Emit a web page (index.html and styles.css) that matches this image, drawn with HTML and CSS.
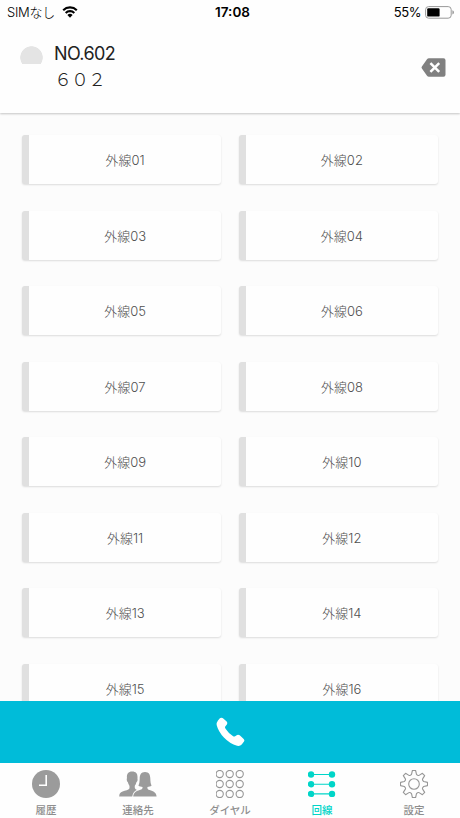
FILE: index.html
```html
<!DOCTYPE html>
<html lang="ja">
<head>
    <meta charset="UTF-8">
    <meta name="viewport" content="width=device-width, initial-scale=1.0">
    <title>回線</title>
    <link rel="stylesheet" href="styles.css">
</head>
<body>

<header class="header">
    <div class="status-bar">
        <div class="carrier">
            <span>SIMなし</span>
            <svg class="wifi" viewBox="0 0 16 12" width="16" height="12">
                <path d="M1.2 4.2a9.7 9.7 0 0 1 13.6 0M3.7 6.9a6.1 6.1 0 0 1 8.6 0" fill="none" stroke="#000" stroke-width="2.1"/>
                <path d="M8 11.8L5.4 9.1a3.7 3.7 0 0 1 5.2 0z"/>
            </svg>
        </div>
        <div class="clock">17:08</div>
        <div class="battery">
            <span>55%</span>
            <svg viewBox="0 0 30 13" width="30" height="13">
                <rect x="0.6" y="0.6" width="25.6" height="11.6" rx="3" fill="none" stroke="#999"/>
                <rect x="2.2" y="2.2" width="12.4" height="8.4" rx="1.2"/>
                <path d="M27.4 4.3q1.6.6 1.6 2.1t-1.6 2.1z" fill="#999"/>
            </svg>
        </div>
    </div>
    <div class="caller">
        <div class="presence"></div>
        <div class="caller-text">
            <div class="caller-name">NO.602</div>
            <div class="caller-number">６０２</div>
        </div>
        <svg class="delete" viewBox="0 0 25 19" width="25" height="19">
            <path d="M8 0.3h14.5a2 2 0 0 1 2 2v14.4a2 2 0 0 1-2 2H8q-1.3 0-2-1L.9 10.6q-.8-1.1 0-2.2L6 1.3q.7-1 2-1z" fill="#808080"/>
            <path d="M9.4 5.1l8.8 8.8M18.2 5.1L9.4 13.9" stroke="#fff" stroke-width="2.5"/>
        </svg>
    </div>
</header>

<main class="lines">
    <div class="line">外線01</div>
    <div class="line">外線02</div>
    <div class="line">外線03</div>
    <div class="line">外線04</div>
    <div class="line">外線05</div>
    <div class="line">外線06</div>
    <div class="line">外線07</div>
    <div class="line">外線08</div>
    <div class="line">外線09</div>
    <div class="line">外線10</div>
    <div class="line">外線11</div>
    <div class="line">外線12</div>
    <div class="line">外線13</div>
    <div class="line">外線14</div>
    <div class="line">外線15</div>
    <div class="line">外線16</div>
</main>

<div class="call-bar">
    <svg viewBox="46 66 88 90" width="29" height="30">
        <path fill="#fff" d="M62 68Q66 68 69 71L79 80Q82 84 79 88L74 94Q72 97 75 101Q84 115 98 124Q101 126 104 124L110 120Q114 118 118 121L130 132Q134 136 131 140L124 149Q119 155 110 153Q88 147 70 128Q53 110 48 90Q47 82 52 76L57 70Q59 68 62 68z"/>
    </svg>
</div>

<nav class="tabs">
    <div class="tab">
        <svg viewBox="0 0 28 28" width="28" height="28">
            <circle cx="14" cy="14" r="14" fill="#9b9b9b"/>
            <path d="M14.2 5v10.3H7" fill="none" stroke="#fff" stroke-width="1.6"/>
        </svg>
        <span>履歴</span>
    </div>
    <div class="tab">
        <svg viewBox="0 0 38 28" width="38" height="28">
            <path fill="#9b9b9b" d="M13.2 1.4C16.8 1.4 18.7 3.5 18.5 7.2Q18.4 8.8 18.6 9.6C18.6 11 18 11.8 17.4 12.2Q16.9 14.4 15.9 15.6C15.5 17.6 15.8 18.8 17 19.5Q18.5 20.3 20 21V26.4H.2C.3 23.4 1.2 22.3 3.6 21.4C6.3 20.4 9.6 19.8 10.4 18.4Q10.8 17 10.3 15.6Q9.3 14.2 8.9 12.2C7.8 11.5 7.4 9.2 8 8C7.4 4 9.3 1.4 13.2 1.4z"/>
            <path fill="#9b9b9b" stroke="#fefefe" stroke-width="1.8" paint-order="stroke" d="M26 2C30 2 31.2 4.8 31.3 8.4C31.4 11.8 31.7 13.8 32.6 15.4C31.5 16.4 30 16.8 28.4 16.9C28.2 18.8 28.9 19.5 30.6 20.1C34.6 21.5 37.1 22.4 37.6 26.4H14.2C14.6 22.7 16.7 21.3 19.4 20.4C22.6 19.4 23.7 18.9 23.6 16.9C22 16.8 20.5 16.4 19.4 15.4C20.3 13.8 20.6 11.8 20.7 8.4C20.8 4.8 22.1 2 26 2z"/>
        </svg>
        <span>連絡先</span>
    </div>
    <div class="tab">
        <svg viewBox="0 0 28 28" width="28" height="28">
            <g fill="none" stroke="#979797" stroke-width="1.1">
                <circle cx="3.7" cy="4" r="3.6"/><circle cx="13.7" cy="4" r="3.6"/><circle cx="23.7" cy="4" r="3.6"/>
                <circle cx="3.7" cy="14" r="3.6"/><circle cx="13.7" cy="14" r="3.6"/><circle cx="23.7" cy="14" r="3.6"/>
                <circle cx="3.7" cy="24" r="3.6"/><circle cx="13.7" cy="24" r="3.6"/><circle cx="23.7" cy="24" r="3.6"/>
            </g>
        </svg>
        <span>ダイヤル</span>
    </div>
    <div class="tab active">
        <svg viewBox="0 0 28 28" width="28" height="28">
            <path d="M3 4.5h21M3 14.2h21M3 23.9h21" stroke="#00d5c8" stroke-width="1.1"/>
            <g fill="#00d5c8">
                <circle cx="3" cy="4.5" r="3.2"/><circle cx="24" cy="4.5" r="3.2"/>
                <circle cx="3" cy="14.2" r="3.2"/><circle cx="24" cy="14.2" r="3.2"/>
                <circle cx="3" cy="23.9" r="3.2"/><circle cx="24" cy="23.9" r="3.2"/>
            </g>
        </svg>
        <span>回線</span>
    </div>
    <div class="tab">
        <svg viewBox="-14 -14 28 28" width="28" height="28">
            <g fill="none" stroke="#979797" stroke-width="1.1" stroke-linejoin="round">
                <path d="M-2.5-9.7L-1.6-13.5H1.6L2.5-9.7Q3.9-8 5.09-8.63L8.41-10.68 10.68-8.41 8.63-5.09Q8-3.9 9.7-2.5L13.5-1.6V1.6L9.7 2.5Q8 3.9 8.63 5.09L10.68 8.41 8.41 10.68 5.09 8.63Q3.9 8 2.5 9.7L1.6 13.5H-1.6L-2.5 9.7Q-3.9 8-5.09 8.63L-8.41 10.68-10.68 8.41-8.63 5.09Q-8 3.9-9.7 2.5L-13.5 1.6V-1.6L-9.7-2.5Q-8-3.9-8.63-5.09L-10.68-8.41-8.41-10.68-5.09-8.63Q-3.9-8-2.5-9.7z"/>
                <circle r="5.3"/>
            </g>
        </svg>
        <span>設定</span>
    </div>
</nav>

</body>
</html>
```

FILE: styles.css
```css
* {
    box-sizing: border-box;
}
body {
    font-family: Inter, "Noto Sans CJK JP", sans-serif;
    margin: 0;
    height: 818px;
    display: flex;
    flex-direction: column;
    overflow: hidden;
    background-color: #fcfcfc;
    color: #222;
}
svg {
    display: block;
    flex: none;
}
.header {
    flex: none;
    height: 113px;
    background-color: #fefefe;
    box-shadow: 0 1px 2px rgba(0, 0, 0, 0.22);
}
.status-bar {
    display: grid;
    grid-template-columns: 1fr auto 1fr;
    align-items: center;
    height: 24px;
    padding: 0 5px 0 7px;
    color: #000;
    font-size: 13px;
    line-height: 24px;
}
.carrier {
    display: flex;
    align-items: center;
    gap: 7px;
    font-weight: 300;
    letter-spacing: -0.3px;
}
.clock {
    padding-left: 3px;
    font-weight: 600;
    font-size: 13.5px;
}
.battery {
    display: flex;
    align-items: center;
    justify-content: flex-end;
    gap: 4px;
    letter-spacing: -0.4px;
}
.caller {
    display: flex;
    padding: 17px 14px 0 20px;
}
.presence {
    width: 23px;
    height: 18px;
    margin: 5px 11px 0 0;
    background: radial-gradient(circle 11.5px at 11.5px 11.5px, #e4e4e4 95%, transparent);
}
.caller-text {
    flex: 1;
    font-size: 18px;
    line-height: 25px;
}
.caller-name {
    letter-spacing: -0.6px;
}
.caller-number {
    font-family: "Noto Sans CJK JP", sans-serif;
    font-weight: 300;
    letter-spacing: -1px;
}
.delete {
    margin-top: 17px;
}
.lines {
    flex: 1;
    min-height: 0;
    overflow: hidden;
    display: grid;
    grid-template-columns: 1fr 1fr;
    grid-auto-rows: 49px;
    gap: 26.5px 17.5px;
    padding: 22px 22px 0;
}
.line {
    display: flex;
    align-items: center;
    justify-content: center;
    border-left: 7px solid #e0e0e0;
    border-radius: 3px;
    background-color: #fefefe;
    box-shadow: 0 1px 2px rgba(0, 0, 0, 0.13);
    color: #505050;
    font-size: 13px;
    font-weight: 300;
}
.call-bar {
    flex: none;
    display: flex;
    align-items: center;
    justify-content: center;
    height: 62px;
    background-color: #00bcd9;
}
.tabs {
    flex: none;
    display: grid;
    grid-template-columns: repeat(5, 1fr);
    height: 55px;
    background-color: #fefefe;
}
.tab {
    display: flex;
    flex-direction: column;
    align-items: center;
    padding-top: 7px;
    color: #8e8e8e;
    font-size: 10.5px;
    font-weight: 500;
    line-height: 25px;
}
.tab.active {
    color: #00d5c8;
}
```
